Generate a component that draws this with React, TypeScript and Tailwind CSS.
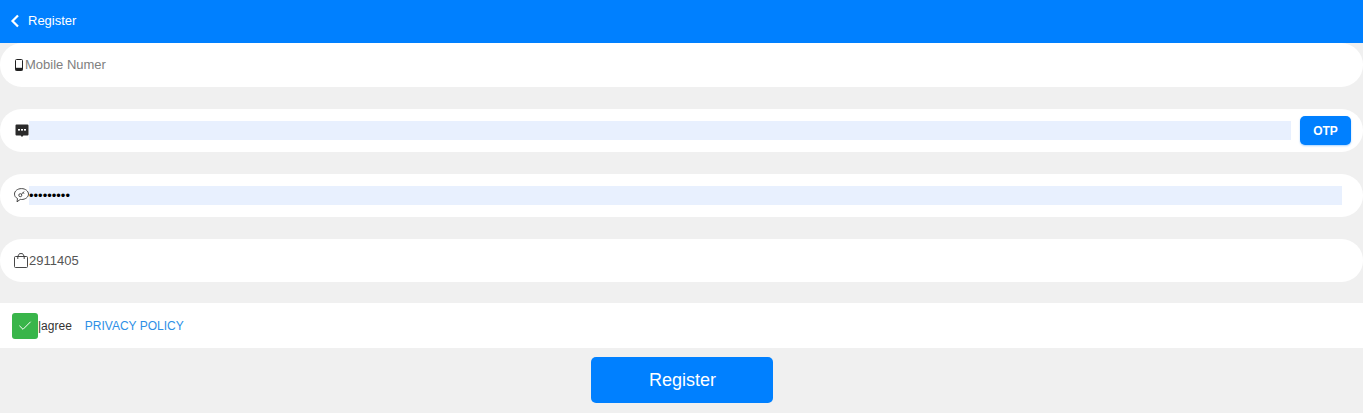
import { Check } from 'lucide-react';

function BackIcon() {
  return (
    <svg width="10" height="14" viewBox="0 0 10 14" fill="none" stroke="#fff" strokeWidth="2.200" className="shrink-0">
      <path d="M8 1.500 2.500 7 8 12.500" />
    </svg>
  );
}

function PhoneIcon() {
  return (
    <svg width="8" height="12" viewBox="0 0 8 12" className="shrink-0">
      <rect x="0.5" y="0.5" width="7" height="11" rx="1" fill="none" stroke="#222" strokeWidth="1" />
      <rect x="0.5" y="8.800" width="7" height="2.700" fill="#222" />
    </svg>
  );
}

function MessageIcon() {
  return (
    <svg width="14" height="14" viewBox="0 0 14 14" className="shrink-0">
      <path d="M1.500 0.500h11a1 1 0 0 1 1 1v9a1 1 0 0 1-1 1H8.400L7 13 5.600 11.500H1.500a1 1 0 0 1-1-1v-9a1 1 0 0 1 1-1z" fill="#2b2b2b" />
      <rect x="3" y="5" width="2" height="1.600" fill="#fff" />
      <rect x="6" y="5" width="2" height="1.600" fill="#fff" />
      <rect x="9" y="5" width="2" height="1.600" fill="#fff" />
    </svg>
  );
}

function KeyBubbleIcon() {
  return (
    <svg width="15" height="15" viewBox="0 0 15 15" fill="none" stroke="#333" strokeWidth="0.900" className="shrink-0">
      <path d="M7.500 0.600C3.500 0.600 0.500 3 0.500 6.100c0 1.900 1.100 3.500 3 4.400L3 13.800l3.300-2.400c.4.100.8.100 1.200.100 3.900 0 7-2.400 7-5.400S11.400 0.600 7.500 0.600z" />
      <circle cx="6.300" cy="7.200" r="1.500" />
      <path d="M7.400 6.100l2.900-2.500M9 4.700l1 1" />
    </svg>
  );
}

function BagIcon() {
  return (
    <svg width="14" height="15" viewBox="0 0 14 15" fill="none" stroke="#333" strokeWidth="0.900" className="shrink-0">
      <rect x="0.500" y="3.500" width="13" height="11" rx="1" />
      <path d="M3.800 6V3.200L5.500 0.600h3L10.200 3.200V6" />
    </svg>
  );
}

export default function App() {
  return (
    <div className="min-h-screen bg-[#f0f0f0] font-['Liberation_Sans',Arial,sans-serif]">
      {/* Header */}
      <div className="h-[43px] bg-[#0080ff] flex items-center pl-[10px] pb-[2px] text-white text-[13px]">
        <BackIcon />
        <span className="ml-[8px]">Register</span>
      </div>

      {/* Fields */}
      <div className="flex flex-col gap-[22px]">
        <div className="h-[44px] bg-white rounded-[22px] flex items-center pl-[15px] pr-[21px]">
          <PhoneIcon />
          <span className="ml-[2px] text-[13px] text-[#808080]">Mobile Numer</span>
        </div>

        <div className="h-[43px] bg-white rounded-[22px] flex items-center pl-[15px] pr-[12px]">
          <MessageIcon />
          <div className="flex-1 h-[19px] bg-[#e8f0fe]" />
          <button className="ml-[9px] w-[51px] h-[29px] rounded-[5px] bg-[#0080ff] text-white text-[12px] font-bold shadow-[0_1px_2px_rgba(0,128,255,0.35)]">
            OTP
          </button>
        </div>

        <div className="h-[43px] bg-white rounded-[22px] flex items-center pl-[14px] pr-[21px]">
          <KeyBubbleIcon />
          <div className="flex-1 h-[19px] bg-[#e8f0fe] text-[13px] leading-[19px] text-black">•••••••••</div>
        </div>

        <div className="h-[43px] bg-white rounded-[22px] flex items-center pl-[14px] pr-[21px]">
          <BagIcon />
          <span className="ml-[1px] text-[13px] text-[#555]">2911405</span>
        </div>
      </div>

      {/* Agreement */}
      <div className="mt-[21px] h-[45px] bg-white flex items-center pl-[12px] text-[12px]">
        <div className="w-[26px] h-[26px] rounded-[3px] bg-[#39b54a] flex items-center justify-center">
          <Check size={16} strokeWidth={1.500} className="text-white" />
        </div>
        <span className="text-[#333]">|agree</span>
        <span className="ml-[13px] text-[#2d8fe6]">PRIVACY POLICY</span>
      </div>

      <div className="flex justify-center mt-[9px]">
        <button className="w-[182px] h-[46px] rounded-[5px] bg-[#0080ff] pl-[2px] text-white text-[18px]">Register</button>
      </div>
    </div>
  );
}
